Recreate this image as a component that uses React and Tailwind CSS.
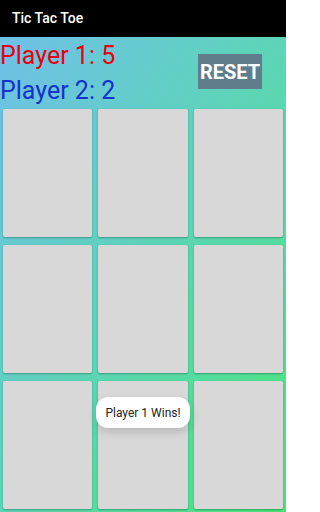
import React from 'react';

const cells = Array.from({ length: 9 }, (_, i) => i);

export default function App() {
  return (
    <div className="relative w-[286px] h-[512px] flex flex-col overflow-hidden font-['Roboto',sans-serif]">
      {/* toolbar */}
      <div className="h-[37px] bg-black flex items-center px-[12px]">
        <span className="text-white text-[14px] font-medium">Tic Tac Toe</span>
      </div>

      <div className="flex-1 flex flex-col bg-linear-to-br from-[#6fc0e8] to-[#48e677]">
        {/* scores */}
        <div className="h-[69px] flex pt-px">
          <div className="text-[25px] leading-[35px]">
            <div className="text-[#e8000d]">Player 1: 5</div>
            <div className="text-[#1432cc]">Player 2: 2</div>
          </div>
          <button className="ml-auto mr-[24px] mt-[16px] w-[64px] h-[35px] bg-[#607d8b] text-white text-[20px] font-bold flex items-center justify-center">
            RESET
          </button>
        </div>

        {/* board */}
        <div className="grid grid-cols-3 grid-rows-[128px_128px_128px] gap-x-[6px] gap-y-[8px] px-[3px] pt-[3px]">
          {cells.map((c) => (
            <div
              key={c}
              className="bg-[#d7d8d7] rounded-[2px] shadow-[0_1px_2px_rgba(0,0,0,0.3)]"
            />
          ))}
        </div>
      </div>

      {/* toast */}
      <div className="absolute left-[96px] top-[397px] w-[94px] h-[31px] rounded-[12px] bg-white shadow-[0_4px_10px_rgba(0,0,0,0.15)] flex items-center justify-center">
        <span className="text-[12px] text-[#222]">Player 1 Wins!</span>
      </div>
    </div>
  );
}
